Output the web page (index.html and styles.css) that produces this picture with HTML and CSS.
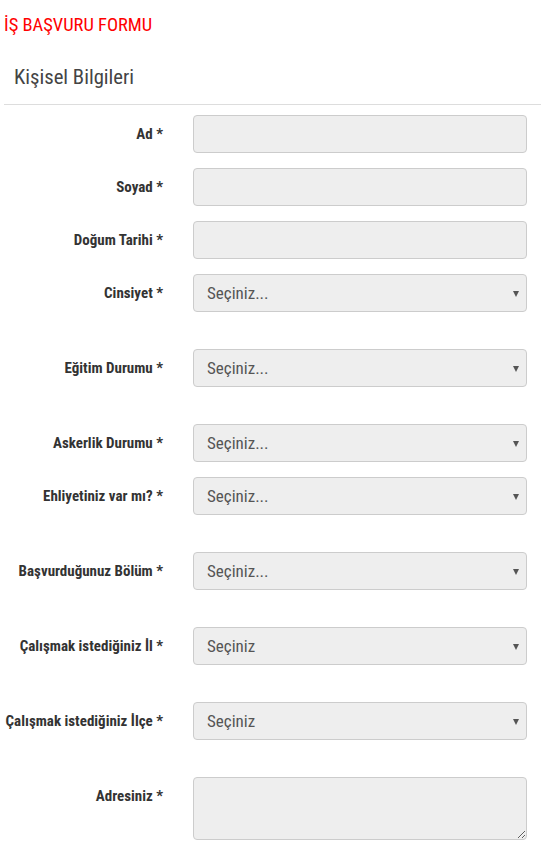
FILE: index.html
```html
<!DOCTYPE html>
<html lang="tr">
<head>
    <meta charset="UTF-8">
    <title>İş Başvuru Formu</title>
    <link rel="stylesheet" href="styles.css">
</head>
<body>
<div class="page">
    <h1 class="title">İŞ BAŞVURU FORMU</h1>
    <h2 class="legend">Kişisel Bilgileri</h2>
    <form class="form">
        <div class="row">
            <label class="lbl">Ad *</label>
            <input type="text" class="field">
        </div>
        <div class="row">
            <label class="lbl">Soyad *</label>
            <input type="text" class="field">
        </div>
        <div class="row">
            <label class="lbl">Doğum Tarihi *</label>
            <input type="text" class="field">
        </div>
        <div class="row row-help">
            <label class="lbl">Cinsiyet *</label>
            <div class="select">Seçiniz...</div>
        </div>
        <div class="row row-help">
            <label class="lbl">Eğitim Durumu *</label>
            <div class="select">Seçiniz...</div>
        </div>
        <div class="row">
            <label class="lbl">Askerlik Durumu *</label>
            <div class="select">Seçiniz...</div>
        </div>
        <div class="row row-help">
            <label class="lbl">Ehliyetiniz var mı? *</label>
            <div class="select">Seçiniz...</div>
        </div>
        <div class="row row-help">
            <label class="lbl">Başvurduğunuz Bölüm *</label>
            <div class="select">Seçiniz...</div>
        </div>
        <div class="row row-help">
            <label class="lbl">Çalışmak istediğiniz İl *</label>
            <div class="select">Seçiniz</div>
        </div>
        <div class="row row-help">
            <label class="lbl">Çalışmak istediğiniz İlçe *</label>
            <div class="select">Seçiniz</div>
        </div>
        <div class="row">
            <label class="lbl">Adresiniz *</label>
            <textarea class="field area"></textarea>
        </div>
    </form>
</div>
</body>
</html>
```

FILE: styles.css
```css
body{
    margin: 0;
    background: #fff;
    font-family: "Roboto Condensed", "Liberation Sans Narrow", "Arial Narrow", sans-serif;
}
.page{
    padding: 0 14px 0 4px;
}
.title{
    margin: 0;
    padding-top: 14px;
    font-size: 18.5px;
    line-height: 22px;
    font-weight: normal;
    color: #f00;
}
.legend{
    margin: 0 -14px 0 0;
    padding: 29px 0 15px 10px;
    font-size: 20.7px;
    line-height: 24px;
    font-weight: normal;
    color: #444;
    border-bottom: 1px solid #ddd;
}
.form{
    padding-top: 10px;
}
.row{
    display: flex;
    gap: 30px;
    margin-bottom: 15px;
}
.row-help{
    margin-bottom: 37px;
}
.lbl{
    width: 159px;
    flex: none;
    text-align: right;
    white-space: nowrap;
    font-size: 15px;
    font-weight: bold;
    color: #333;
    line-height: 38px;
}
.field, .select{
    flex: 1;
    box-sizing: border-box;
    height: 38px;
    margin: 0;
    background: #eee;
    border: 1px solid #ccc;
    border-radius: 4px;
    font: inherit;
}
.select{
    position: relative;
    padding-left: 13px;
    font-size: 17px;
    line-height: 36px;
    color: #555;
}
.select::after{
    content: "";
    position: absolute;
    right: 7px;
    top: 16px;
    border-left: 3px solid transparent;
    border-right: 3px solid transparent;
    border-top: 6px solid #555;
}
.area{
    height: 63px;
    resize: vertical;
}
```
